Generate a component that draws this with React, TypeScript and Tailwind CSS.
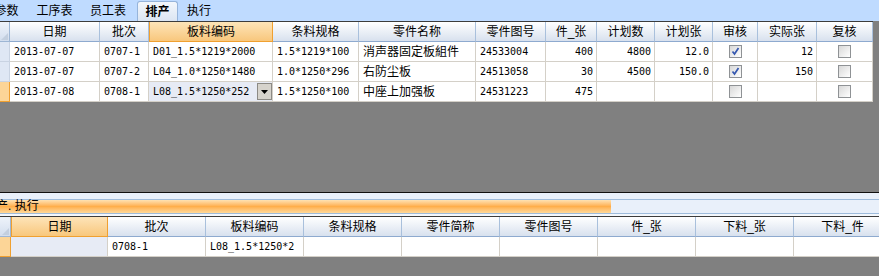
import React, { FC } from 'react';

type Cell = string | boolean;

const mono = "font-['DejaVu_Sans_Mono',monospace] text-[10px]";
const cjk = "font-['Liberation_Sans','Noto_Sans_CJK_SC',sans-serif] text-[12px]";

// Top grid (排产)
const topHead = ['日期', '批次', '板料编码', '条料规格', '零件名称', '零件图号', '件_张', '计划数', '计划张', '审核', '实际张', '复核'];
const topAlign = ['l', 'l', 'l', 'l', 'c', 'l', 'r', 'r', 'r', 'x', 'r', 'x'];
const topRows: Cell[][] = [
  ['2013-07-07', '0707-1', 'D01_1.5*1219*2000', '1.5*1219*100', '消声器固定板組件', '24533004', '400', '4800', '12.0', true, '12', false],
  ['2013-07-07', '0707-2', 'L04_1.0*1250*1480', '1.0*1250*296', '右防尘板', '24513058', '30', '4500', '150.0', true, '150', false],
  ['2013-07-08', '0708-1', 'L08_1.5*1250*252', '1.5*1250*100', '中座上加强板', '24531223', '475', '', '', false, '', false],
];

// Lower grid (执行)
const lowHead = ['日期', '批次', '板料编码', '条料规格', '零件简称', '零件图号', '件_张', '下料_张', '下料_件'];
const lowRow = ['', '0708-1', 'L08_1.5*1250*2', '', '', '', '', '', ''];

const Check: FC<{ on: boolean }> = ({ on }) => (
  <span className="flex h-[13px] w-[13px] items-center justify-center border border-[#8f9295] bg-linear-to-br from-[#d8d8d8] to-white">
    {on && (
      <svg width="9" height="9" viewBox="0 0 9 9">
        <path d="M1.5 4.5 L3.5 7 L7.5 1" fill="none" stroke="#3658b0" strokeWidth="1.7" />
      </svg>
    )}
  </span>
);

const Corner = () => (
  <div className="relative border-r border-b border-[#9eb6d4] bg-linear-to-b from-[#eef3fa] to-[#d3deee]">
    <svg className="absolute right-[1px] bottom-[1px]" width="7" height="7" viewBox="0 0 7 7">
      <path d="M7 0 L7 7 L0 7 Z" fill="#c3cfdf" />
    </svg>
  </div>
);

const Head: FC<{ title: string; active?: boolean }> = ({ title, active }) => (
  <div
    className={`${cjk} flex items-center justify-center border-b ${
      active
        ? 'border-r border-l border-[#f0a030] bg-linear-to-b from-[#fde4b8] to-[#f8c77c]'
        : 'border-r border-r-[#a9c0dc] border-b-[#8eaacf] bg-linear-to-b from-white to-[#d8e1ee]'
    } text-black`}
  >
    {title}
  </div>
);

const App: FC = () => {
  return (
    <div className="h-[276px] w-[879px] overflow-hidden bg-[#808080]">
      {/* Upper half */}
      <div className="h-[192px]">
        {/* Tabs */}
        <div className={`${cjk} flex h-[21px] items-end bg-[#bfdbff] text-black`}>
          <div className="ml-[-15px] flex h-[21px] w-[43px] items-center justify-center">参数</div>
          <div className="flex h-[21px] w-[53px] items-center justify-center">工序表</div>
          <div className="flex h-[21px] w-[54px] items-center justify-center">员工表</div>
          <div className="ml-[2px] flex h-[20px] w-[41px] items-center justify-center rounded-t-[3px] border border-b-0 border-[#96b4da] bg-linear-to-b from-[#f3f7fc] to-[#dbe5f2] font-bold">
            排产
          </div>
          <div className="flex h-[21px] w-[42px] items-center justify-center">执行</div>
        </div>

        {/* Grid */}
        <div className="grid w-[873px] grid-cols-[10px_90px_49px_124px_86px_117px_70px_51px_58px_58px_45px_59px_56px] grid-rows-[20px_20px_20px_20px] border-t border-[#3c3c3c] bg-white">
          <Corner />
          {topHead.map((h, i) => (
            <Head key={h} title={h} active={i === 2} />
          ))}
          {topRows.map((row, r) => (
            <React.Fragment key={r}>
              <div
                className={`border-b ${
                  r === 2 ? 'border-r border-[#f0a030] bg-[#fcd597]' : 'border-r border-[#c9d3e2] bg-[#dfe7f4]'
                }`}
              />
              {row.map((v, c) => {
                const a = topAlign[c];
                const editing = r === 2 && c === 2;
                return (
                  <div
                    key={c}
                    className={`flex items-center overflow-hidden border-r border-b border-[#d4d0c8] whitespace-nowrap text-black ${
                      a === 'c' ? cjk : mono
                    } ${a === 'r' ? 'justify-end pr-[3px]' : a === 'x' ? 'justify-center' : 'pl-[4px]'} ${
                      editing ? 'justify-between bg-[#e7ebf5] pr-0' : ''
                    }`}
                  >
                    {typeof v === 'boolean' ? <Check on={v} /> : <span>{v}</span>}
                    {editing && (
                      <span className="flex h-[17px] w-[15px] items-center justify-center border border-[#8c8a85] bg-[#d6d3cc]">
                        <svg width="7" height="4" viewBox="0 0 7 4">
                          <path d="M0 0 L7 0 L3.5 4 Z" fill="#000" />
                        </svg>
                      </span>
                    )}
                  </div>
                );
              })}
            </React.Fragment>
          ))}
        </div>
      </div>

      {/* Lower half */}
      <div className="h-px bg-[#101010]" />
      <div className="h-[6px] bg-[#e9f0fa]" />
      <div className="relative flex h-[15px] border-y border-[#9ebbdb] bg-[#e9f0fa]">
        <div className="w-[611px] bg-linear-to-b from-[#ffe2b2] via-[#ffae4a] to-[#ffd999]" />
        <span className={`${cjk} absolute top-[-2px] left-[-16px] leading-[17px] text-black`}>排产. 执行</span>
      </div>
      <div className="h-[2px] bg-[#f3f7fc]" />
      <div className="grid w-[892px] grid-cols-[11px_97px_98px_98px_98px_98px_98px_98px_98px_98px] grid-rows-[20px_20px] border-t border-[#3c3c3c] bg-white">
        <Corner />
        {lowHead.map((h, i) => (
          <Head key={h} title={h} active={i === 0} />
        ))}
        <div className="border-r border-b border-[#f0a030] bg-[#fcd597]" />
        {lowRow.map((v, c) => (
          <div
            key={c}
            className={`${mono} flex items-center overflow-hidden border-r border-b border-[#d4d0c8] pl-[4px] whitespace-nowrap text-black ${
              c === 0 ? 'bg-[#e7ebf5]' : ''
            }`}
          >
            {v}
          </div>
        ))}
      </div>
    </div>
  );
};

export default App;
